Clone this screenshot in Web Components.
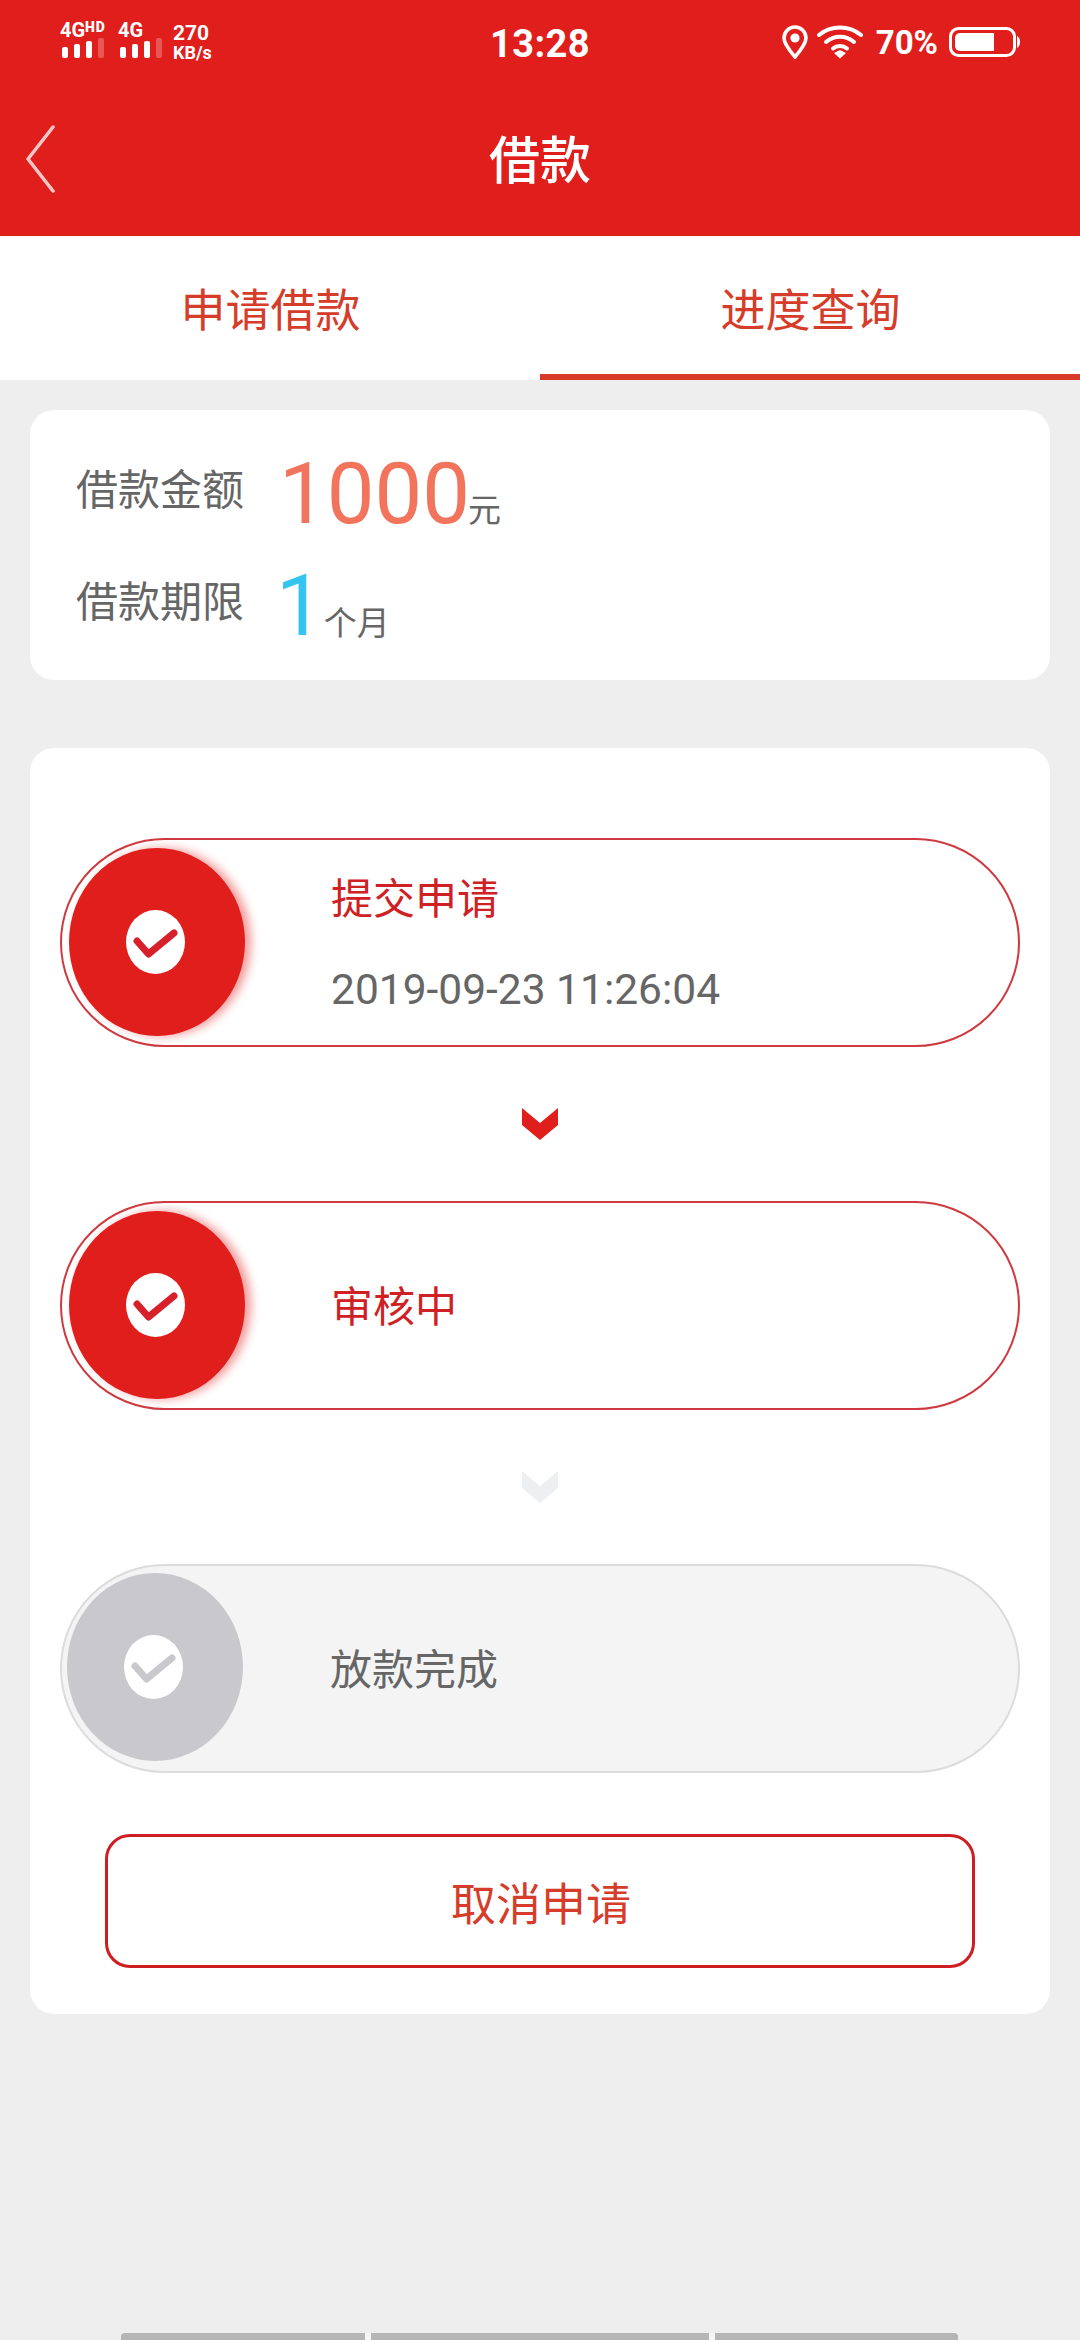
<!DOCTYPE html>
<html lang="zh">
<head>
<meta charset="utf-8">
<title>借款</title>
<style>
  html, body { margin: 0; padding: 0; background: #eeeeee; }
  body { width: 1080px; height: 2340px; overflow: hidden; font-family: Roboto, "Noto Sans CJK SC", sans-serif; }
  loan-page { height: 2340px; }
</style>
</head>
<body>
<loan-page>
  <status-bar></status-bar>
  <nav-bar>借款</nav-bar>
  <tab-bar></tab-bar>
  <info-card></info-card>
  <progress-card>
    <step-pill state="done">
      <span slot="title">提交申请</span>
      <span slot="sub">2019-09-23 11:26:04</span>
    </step-pill>
    <step-arrow></step-arrow>
    <step-pill state="done">
      <span slot="title">审核中</span>
    </step-pill>
    <step-arrow state="off"></step-arrow>
    <step-pill state="off">
      <span slot="title">放款完成</span>
    </step-pill>
    <cancel-button>取消申请</cancel-button>
  </progress-card>
  <gesture-bar></gesture-bar>
</loan-page>

<script>
const CJK = `Roboto, "Noto Sans CJK SC", sans-serif`;

class LoanPage extends HTMLElement {
  constructor() {
    super();
    this.attachShadow({ mode: 'open' }).innerHTML = `
      <style>
        :host { display: flex; flex-direction: column; width: 1080px; background: #eeeeee; font-family: ${CJK}; }
      </style>
      <slot></slot>`;
  }
}

class StatusBar extends HTMLElement {
  constructor() {
    super();
    const bars = `
      <div class="bars"><i style="height:11px"></i><i style="height:14px"></i><i style="height:17px"></i><i class="dim" style="height:20px"></i></div>`;
    this.attachShadow({ mode: 'open' }).innerHTML = `
      <style>
        :host { display: grid; grid-template-columns: 1fr auto 1fr; align-items: start; height: 80px; background: #e01e1c; color: #fff; font-family: Roboto, sans-serif; }
        .left { display: flex; padding: 22px 0 0 60px; }
        .sig { display: flex; flex-direction: column; font-weight: 700; font-size: 20px; line-height: 16px; }
        .sig.first { width: 58px; }
        .sig.second { width: 55px; }
        .sig sup { font-size: 14px; line-height: 10px; vertical-align: top; letter-spacing: .8px; font-weight: 900; }
        .bars { display: flex; align-items: flex-end; gap: 6px; height: 20px; padding-left: 2px; }
        .bars i { display: block; width: 6px; border-radius: 2px; background: #fff; }
        .bars i.dim { background: rgba(255,255,255,.25); }
        .speed { line-height: 1; display: flex; flex-direction: column; padding-top: 1px; }
        .speed b { font-size: 21px; height: 21px; font-weight: 700; }
        .speed span { font-size: 18px; font-weight: 700; }
        .time { font-size: 38px; font-weight: 700; line-height: 88px; height: 80px; letter-spacing: .4px; }
        .right { display: flex; justify-content: flex-end; align-items: flex-start; padding: 25px 60px 0 0; }
        .pct { font-size: 33px; font-weight: 700; line-height: 35px; margin: 0 11px 0 13px; }
      </style>
      <div class="left">
        <div class="sig first"><div>4G<sup>HD</sup></div>${bars}</div>
        <div class="sig second"><div>4G</div>${bars}</div>
        <div class="speed"><b>270</b><span>KB/s</span></div>
      </div>
      <div class="time">13:28</div>
      <div class="right">
        <svg width="26" height="34" viewBox="0 0 26 34" style="margin-right:9px"><path d="M13 2a11 11 0 0 1 11 11c0 6-6 13-11 19C8 26 2 19 2 13A11 11 0 0 1 13 2z" fill="none" stroke="#fff" stroke-width="3.6" stroke-linejoin="round"/><circle cx="13" cy="13" r="4.6" fill="#fff"/></svg>
        <svg width="46" height="34" viewBox="0 0 46 34" fill="none" stroke="#fff" stroke-width="4" stroke-linecap="round"><path d="M2 10C14 0 32 0 44 10"/><path d="M9 17c8-7 20-7 28 0"/><path d="M16 23.500c4-3.500 10-3.500 14 0"/><path d="M17 28l6-3 6 3-6 5.500z" fill="#fff" stroke="none"/></svg>
        <span class="pct">70%</span>
        <svg width="71" height="30" viewBox="0 0 71 30" style="margin-top:2px"><rect x="1.500" y="1.500" width="64" height="27" rx="8" fill="none" stroke="#fff" stroke-width="3"/><path d="M11 6h34v18H11a5 5 0 0 1-5-5v-8a5 5 0 0 1 5-5z" fill="#fff"/><path d="M68 9c2 1 3 3 3 6s-1 5-3 6z" fill="#fff"/></svg>
      </div>`;
  }
}

class NavBar extends HTMLElement {
  constructor() {
    super();
    this.attachShadow({ mode: 'open' }).innerHTML = `
      <style>
        :host { display: flex; align-items: center; height: 156px; background: #e01e1c; color: #fff; }
        svg { margin: 2px 0 0 26px; flex: none; }
        .title { flex: 1; text-align: center; font-size: 51px; line-height: 164px; height: 156px; font-weight: 500; margin-left: -56px; }
      </style>
      <svg width="30" height="70" viewBox="0 0 30 70" fill="none" stroke="#f7c7c5" stroke-width="3.500" stroke-linecap="round" stroke-linejoin="round"><path d="M27 3 L2 35 L27 67"/></svg>
      <div class="title"><slot></slot></div>`;
  }
}

class TabBar extends HTMLElement {
  constructor() {
    super();
    this.attachShadow({ mode: 'open' }).innerHTML = `
      <style>
        :host { display: flex; height: 144px; background: #fff; }
        div { box-sizing: border-box; width: 540px; height: 144px; padding-left: 1px; font-size: 45px; line-height: 152px; text-align: center; color: #d63c2a; }
        .b { border-bottom: 6px solid #d9392a; }
      </style>
      <div class="a">申请借款</div>
      <div class="b">进度查询</div>`;
  }
}

class InfoCard extends HTMLElement {
  constructor() {
    super();
    this.attachShadow({ mode: 'open' }).innerHTML = `
      <style>
        :host { display: block; box-sizing: border-box; width: 1020px; height: 270px; margin: 30px 0 0 30px; padding: 28px 0 0 46px; background: #fff; border-radius: 24px; color: #666; }
        .row { display: flex; align-items: center; height: 112px; }
        .label { width: 203px; font-size: 42px; line-height: 60px; padding-bottom: 6px; }
        .val { display: block; line-height: 100px; padding-top: 24px; white-space: nowrap; }
        .num { font-size: 85px; }
        .unit { font-size: 33px; margin-left: -2px; vertical-align: 1px; }
        .one { color: #f3745c; }
        .two { color: #35c3ef; margin-left: -3px; }
        .unit2 { font-size: 33px; margin-left: 0; vertical-align: 0; }
      </style>
      <div class="row"><span class="label">借款金额</span><span class="val"><span class="num one">1000</span><span class="unit">元</span></span></div>
      <div class="row"><span class="label">借款期限</span><span class="val"><span class="num two">1</span><span class="unit2">个月</span></span></div>`;
  }
}

class ProgressCard extends HTMLElement {
  constructor() {
    super();
    this.attachShadow({ mode: 'open' }).innerHTML = `
      <style>
        :host { display: block; box-sizing: border-box; width: 1020px; height: 1266px; margin: 68px 0 0 30px; padding: 90px 30px 0; background: #fff; border-radius: 24px; }
      </style>
      <slot></slot>`;
  }
}

class StepPill extends HTMLElement {
  constructor() {
    super();
    this.attachShadow({ mode: 'open' }).innerHTML = `
      <style>
        :host { display: flex; align-items: center; box-sizing: border-box; width: 960px; height: 209px; padding: 0 0 2px 7px; border: 2px solid #cf3a40; border-radius: 105px; background: #fff; }
        .dot { flex: none; box-sizing: border-box; display: flex; align-items: center; justify-content: center; width: 176px; height: 188px; padding-right: 4px; border-radius: 50%; background: #e01e1c; box-shadow: 6px 0 10px rgba(224,30,28,.45); }
        .dot svg { display: block; }
        .text { margin-left: 86px; margin-top: 6px; display: flex; flex-direction: column; }
        ::slotted([slot=title]) { font-size: 42px; line-height: 60px; color: #cf2024; }
        ::slotted([slot=sub]) { font-size: 42.500px; line-height: 60px; margin-top: 30px; color: #666; }
        :host([state=off]) { border-color: #dcdcde; background: #f4f4f5; padding: 0 0 4px 5px; }
        :host([state=off]) .dot { background: #c9c9cd; box-shadow: none; }
        :host([state=off]) .text { margin-left: 87px; margin-top: 8px; }
        :host([state=off]) ::slotted([slot=title]) { color: #666; }
        :host([state=off]) path { stroke: #c9c9cd; }
      </style>
      <div class="dot">
        <svg width="59" height="64" viewBox="0 0 59 64"><ellipse cx="29.500" cy="32" rx="29.500" ry="32" fill="#fff"/><path d="M11 31 L22.500 44 L48 23" fill="none" stroke="#d8202a" stroke-width="7" stroke-linecap="round" stroke-linejoin="round"/></svg>
      </div>
      <div class="text"><slot name="title"></slot><slot name="sub"></slot></div>`;
  }
}

class StepArrow extends HTMLElement {
  constructor() {
    super();
    const off = this.getAttribute('state') === 'off';
    this.attachShadow({ mode: 'open' }).innerHTML = `
      <style>
        :host { display: flex; justify-content: center; align-items: center; height: 154px; }
        svg { display: block; }
      </style>
      <svg width="36" height="32" viewBox="0 0 36 32"><path d="M0 0 L18 15 L36 0 V17 L18 32 L0 17 Z" fill="${off ? '#eeeff1' : '#e01e1c'}"/></svg>`;
  }
}

class CancelButton extends HTMLElement {
  constructor() {
    super();
    this.attachShadow({ mode: 'open' }).innerHTML = `
      <style>
        :host { display: flex; align-items: center; justify-content: center; box-sizing: border-box; width: 870px; height: 134px; margin: 61px 0 0 45px; padding-left: 2px; border: 3.500px solid #cf1d24; border-radius: 25px; background: #fff; color: #d63c2a; font-size: 45px; }
      </style>
      <slot></slot>`;
  }
}

class GestureBar extends HTMLElement {
  constructor() {
    super();
    this.attachShadow({ mode: 'open' }).innerHTML = `
      <style>
        :host { display: flex; width: 837px; height: 7px; margin: 0 0 0 121px; position: fixed; left: 0; bottom: 0; }
        i { display: block; height: 7px; background: #b5b5b5; }
        .a { width: 244px; border-radius: 4px 0 0 0; }
        .b { width: 338px; }
        .c { width: 243px; border-radius: 0 4px 0 0; }
        .g { width: 6px; background: #f7f7f7; }
      </style>
      <i class="a"></i><i class="g"></i><i class="b"></i><i class="g"></i><i class="c"></i>`;
  }
}

customElements.define('loan-page', LoanPage);
customElements.define('status-bar', StatusBar);
customElements.define('nav-bar', NavBar);
customElements.define('tab-bar', TabBar);
customElements.define('info-card', InfoCard);
customElements.define('progress-card', ProgressCard);
customElements.define('step-pill', StepPill);
customElements.define('step-arrow', StepArrow);
customElements.define('cancel-button', CancelButton);
customElements.define('gesture-bar', GestureBar);
</script>
</body>
</html>
